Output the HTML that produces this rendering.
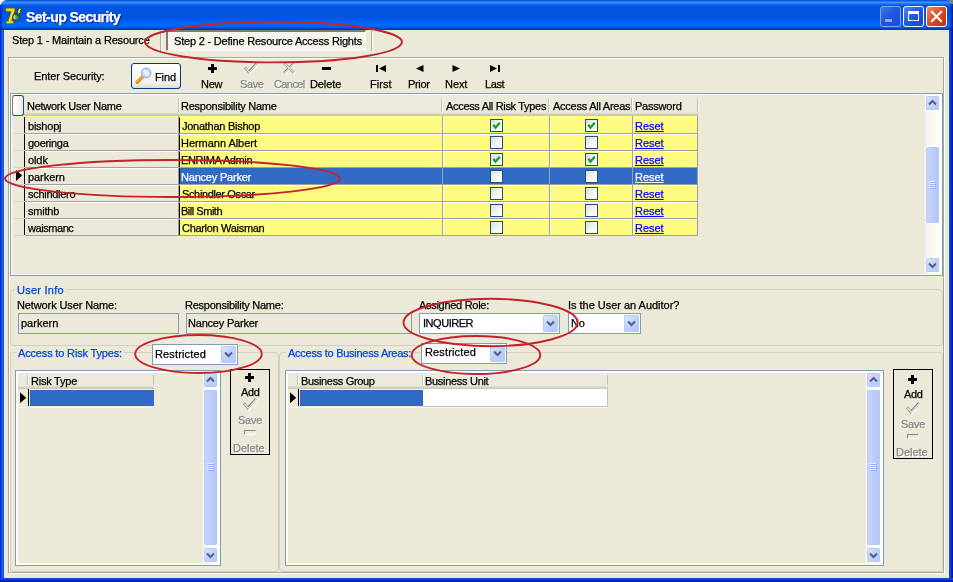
<!DOCTYPE html>
<html><head><meta charset="utf-8"><title>Set-up Security</title>
<style>
html,body{margin:0;padding:0}
body{width:953px;height:582px;position:relative;overflow:hidden;background:#ECE9D8;font:11px "Liberation Sans",sans-serif;color:#000}
.a{position:absolute}
.t{position:absolute;white-space:nowrap;line-height:13px;height:13px;will-change:transform;-webkit-text-stroke:0.25px currentColor}
.blue{color:#0046D5}
.dis{color:#858585;text-shadow:1px 1px 0 #fff}
.hl{position:absolute;height:1px}
.vl{position:absolute;width:1px}
.edit{position:absolute;border:1px solid #7F9DB9;box-sizing:border-box}
.combo{position:absolute;border:1px solid #7F9DB9;box-sizing:border-box;background:#fff}
.cbtn{position:absolute;border-radius:2px;background:linear-gradient(135deg,#E1EAFE 0%,#C3D3FD 45%,#B0C4F8 100%);box-shadow:inset 0 0 0 1px #B7CAF5}
.grp{position:absolute;border:1px solid #D0D0BF;border-radius:4px;box-sizing:border-box}
.sb{position:absolute;width:17px;background:linear-gradient(to right,#F3F1EC 0%,#FEFEFB 80%,#fff 100%)}
.sbtn{position:absolute;left:1px;width:13px;height:14px;border-radius:2px;background:linear-gradient(135deg,#DCE6FD 0%,#C2D2FC 50%,#B5C8F7 100%);box-shadow:inset 0 0 0 1px #B7CAF5, 0 0 0 1px #fff}
.thumb{position:absolute;left:1px;width:13px;border-radius:2px;background:linear-gradient(to right,#C9D7FC 0%,#BDCDFA 50%,#B4C6F5 100%);box-shadow:inset 0 0 0 1px #B7CAF5, 0 0 0 1px #fff}
.chk{position:absolute;width:13px;height:13px;box-sizing:border-box;border:1px solid #1C5180;background:linear-gradient(135deg,#DCDCD7 0%,#F3F3EF 50%,#fff 100%)}
.rs{text-decoration:underline}
</style></head>
<body>
<!-- window frame -->
<div class="a" style="left:0;top:0;width:8px;height:8px;background:#fff"></div><div class="a" style="left:945px;top:0;width:8px;height:8px;background:#808080"></div>
<div class="a" style="left:0;top:0;width:953px;height:30px;border-radius:7px 7px 0 0;background:linear-gradient(to bottom,#0046D0 0px,#2878F0 1.5px,#3C8CFC 2.5px,#2880F8 3.5px,#1068F0 4.5px,#0458E4 5.5px,#0054E0 7px,#0054E0 17px,#0056E6 18.5px,#005CF0 20.5px,#0064FA 22.5px,#0068FF 24px,#0068FF 26px,#0058E8 27.5px,#0044C8 28.5px,#0030A8 30px)"></div>
<div class="a" style="left:949px;top:4px;width:4px;height:26px;background:linear-gradient(to right,rgba(0,20,140,0) 0%,rgba(0,20,140,0.35) 50%,rgba(0,16,120,0.85) 100%)"></div><div class="a" style="left:0;top:5px;width:3px;height:25px;background:linear-gradient(to right,rgba(0,20,180,0.75) 0%,rgba(0,30,200,0) 100%)"></div>
<div class="a" style="left:0;top:30px;width:4px;height:552px;background:linear-gradient(to right,#0019CF 0%,#0831D9 25%,#166AEE 50%,#0855DD 100%)"></div>
<div class="a" style="left:949px;top:30px;width:4px;height:552px;background:linear-gradient(to right,#0855DD 0%,#0441D8 40%,#001DA0 80%,#00138C 100%)"></div>
<div class="a" style="left:0;top:578px;width:953px;height:4px;background:linear-gradient(to bottom,#0855DD 0%,#0441D8 40%,#001DA0 80%,#00138C 100%)"></div>
<div class="t" style="left:26.40px;top:8px;font-size:14px;font-weight:bold;letter-spacing:-0.571px;color:#fff;line-height:18px;height:18px;text-shadow:1px 1px 1px #0A1883">Set-up Security</div>
<!-- app icon -->
<svg class="a" style="left:0;top:0" width="30" height="30" viewBox="0 0 30 30">
<path d="M6.6 9 H15.3 V11.2 L12.1 21.6 H13.9 V24 H6.9 V21.9 H8.8 L11.9 12 H6.6 Z" fill="#5A4000"/>
<path d="M6 8.3 H14.7 V10.5 L11.5 21 H13.3 V23.4 H6.3 V21.3 H8.2 L11.3 11.3 H6 Z" fill="#F2E600" stroke="#9A7A00" stroke-width="0.5"/>
<circle cx="16" cy="17.3" r="3.4" fill="#2E9E3E" stroke="#1C2C2C" stroke-width="0.9"/>
<path d="M13.2 17.3 A2.8 2.8 0 0 1 15.2 14.6 L15.6 17.3 L15 19.9 A2.8 2.8 0 0 1 13.2 17.3 Z" fill="#C8B8B8"/>
<path d="M19.3 7.8 L21.6 9 L20 11 L21 11.6 L17.4 15.6 L18.2 12.5 L17.2 12 Z" fill="#FFF200" stroke="#2A2400" stroke-width="0.6"/>
</svg>
<!-- caption buttons -->
<div class="a" style="left:880px;top:6px;width:21px;height:21px;box-sizing:border-box;border:1px solid #7FA4F2;border-radius:3px;background:linear-gradient(135deg,#3C78F0 0%,#1E55E0 50%,#1A4CD8 100%)"><div class="a" style="left:4px;top:12px;width:7px;height:3px;background:#8FA6EE"></div></div>
<div class="a" style="left:903px;top:6px;width:21px;height:21px;box-sizing:border-box;border:1px solid #fff;border-radius:3px;background:linear-gradient(135deg,#4D86F5 0%,#1F58E2 50%,#1A47D0 100%)"><div class="a" style="left:4px;top:4px;width:11px;height:10px;box-sizing:border-box;border:1px solid #fff;border-top-width:3px"></div></div>
<div class="a" style="left:926px;top:6px;width:21px;height:21px;box-sizing:border-box;border:1px solid #fff;border-radius:3px;background:linear-gradient(135deg,#EE8C68 0%,#DC4A22 50%,#C0300C 100%)"><svg class="a" style="left:0;top:0" width="19" height="19"><path d="M5 5 L14 14 M14 5 L5 14" stroke="#fff" stroke-width="2.2" stroke-linecap="square"/></svg></div>
<!-- tabs -->
<div class="t" style="left:12.10px;top:34px;letter-spacing:-0.174px;">Step 1 - Maintain a Resource</div><div class="vl" style="left:160px;top:30px;height:21px;background:#ACA899"></div><div class="vl" style="left:161px;top:30px;height:21px;background:#fff"></div>
<div class="a" style="left:166px;top:30px;width:200px;height:21px;box-sizing:border-box;background:#F6F4EC;border-left:2px solid #807D70;border-top:2px solid #807D70;border-right:1px solid #fff;border-bottom:1px solid #fff"></div>
<div class="t" style="left:173.50px;top:35px;letter-spacing:-0.203px;">Step 2 - Define Resource Access Rights</div><div class="vl" style="left:371px;top:30px;height:21px;background:#ACA899"></div><div class="vl" style="left:372px;top:30px;height:21px;background:#fff"></div>
<!-- page panel -->
<div class="a" style="left:9px;top:58px;width:936px;height:516px;box-sizing:border-box;border:1px solid #fff"></div><div class="a" style="left:8px;top:57px;width:936px;height:516px;box-sizing:border-box;border:1px solid #ACA899"></div>
<!-- toolbar -->
<div class="t" style="left:34.10px;top:70px;letter-spacing:-0.107px;">Enter Security:</div><div class="a" style="left:131px;top:63px;width:50px;height:26px;box-sizing:border-box;border:1px solid #003C74;border-radius:3px;background:linear-gradient(to bottom,#fff 0%,#F8F8F4 40%,#F1F0EA 80%,#DDDACD 100%)"></div>
<svg class="a" style="left:135px;top:67px" width="18" height="18" viewBox="0 0 18 18"><path d="M2.2 15.3 L7.6 9.9" stroke="#C87818" stroke-width="3.4" stroke-linecap="round"/><path d="M2.2 15 L7.6 9.6" stroke="#F4A62A" stroke-width="2.2" stroke-linecap="round"/><circle cx="11.2" cy="6" r="4.7" fill="#BFE2FA" stroke="#A9B8D8" stroke-width="1.4"/><circle cx="11.6" cy="6.4" r="2.2" fill="#E8F6FF"/><circle cx="9.8" cy="4.6" r="1.3" fill="#fff"/></svg>
<div class="t" style="left:155.30px;top:71px;letter-spacing:-0.100px;">Find</div><div class="a" style="left:208px;top:67px;width:9px;height:3px;background:#000"></div><div class="a" style="left:211px;top:64px;width:3px;height:9px;background:#000"></div><div class="t" style="left:201.25px;top:78px;letter-spacing:-0.250px;">New</div><svg class="a" style="left:241.5px;top:60.3px" width="19" height="17" fill="none" stroke-linecap="butt" stroke-linejoin="miter"><path d="M3 7.4 L6.8 12 L15 2.8" transform="translate(0.9,0.9)" stroke="#fff" stroke-width="2.6"/><path d="M3 7.4 L6.8 12 L15 2.8" stroke="#858585" stroke-width="2.6"/><path d="M3 7.4 L6.8 12 L15 2.8" transform="translate(0.35,0.35)" stroke="#ECE9D8" stroke-width="1.3"/></svg><div class="t dis" style="left:239.50px;top:78px;letter-spacing:-0.400px;">Save</div><svg class="a" style="left:279.5px;top:60.3px" width="19" height="17" fill="none" stroke-linecap="butt"><path d="M4 3.2 L14 12.8 M14 3.2 L4 12.8" transform="translate(0.9,0.9)" stroke="#fff" stroke-width="2.4"/><path d="M4 3.2 L14 12.8 M14 3.2 L4 12.8" stroke="#858585" stroke-width="2.4"/><path d="M4 3.2 L14 12.8 M14 3.2 L4 12.8" transform="translate(0.35,0.35)" stroke="#ECE9D8" stroke-width="1.2"/></svg><div class="t dis" style="left:273.80px;top:78px;letter-spacing:-0.600px;">Cancel</div><div class="a" style="left:322px;top:67px;width:9px;height:3px;background:#000"></div><div class="t" style="left:310.35px;top:78px;letter-spacing:-0.100px;">Delete</div><svg class="a" style="left:375px;top:64px" width="12" height="9"><rect x="1" y="1" width="2" height="7" fill="#000"/><path d="M11 1 L11 8 L4 4.5 Z" fill="#000"/></svg><div class="t" style="left:369.60px;top:78px;letter-spacing:0.050px;">First</div><svg class="a" style="left:415px;top:64px" width="9" height="9"><path d="M8.5 1 L8.5 8 L1 4.5 Z" fill="#000"/></svg><div class="t" style="left:407.80px;top:78px;letter-spacing:-0.350px;">Prior</div><svg class="a" style="left:452px;top:64px" width="9" height="9"><path d="M0.5 1 L0.5 8 L8 4.5 Z" fill="#000"/></svg><div class="t" style="left:444.70px;top:78px;letter-spacing:-0.067px;">Next</div><svg class="a" style="left:489px;top:64px" width="12" height="9"><rect x="9" y="1" width="2" height="7" fill="#000"/><path d="M1 1 L1 8 L8 4.5 Z" fill="#000"/></svg><div class="t" style="left:484.60px;top:78px;letter-spacing:-0.400px;">Last</div>
<!-- main grid -->
<div class="a" style="left:10px;top:93px;width:933px;height:183px;box-sizing:border-box;border:1px solid #7F9DB9;box-shadow:inset 0 0 0 1px #fff"></div>
<div class="a" style="left:12px;top:95px;width:686px;height:21px;background:linear-gradient(to bottom,#EBEADB 0%,#EBEADB 82%,#E2DECD 86%,#D6D2C2 91%,#CBC7B8 96%,#CBC7B8 100%)"></div>
<div class="a" style="left:12px;top:95px;width:12px;height:21px;box-sizing:border-box;border:1px solid #1C5180;border-left-color:#8C7B5A;border-radius:3px;background:linear-gradient(to right,#fff 0%,#F4F3EE 70%,#E4E2D8 100%)"></div>
<div class="t" style="left:26.80px;top:100px;letter-spacing:-0.263px;">Network User Name</div><div class="t" style="left:181.20px;top:100px;letter-spacing:-0.244px;">Responsibility Name</div><div class="t" style="left:445.50px;top:100px;letter-spacing:-0.320px;">Access All Risk Types</div><div class="t" style="left:552.70px;top:100px;letter-spacing:-0.247px;">Access All Areas</div><div class="t" style="left:634.60px;top:100px;letter-spacing:-0.214px;">Password</div><div class="vl" style="left:178px;top:98px;height:14px;background:#C5C2B2"></div><div class="vl" style="left:179px;top:98px;height:14px;background:#fff"></div><div class="vl" style="left:441px;top:98px;height:14px;background:#C5C2B2"></div><div class="vl" style="left:442px;top:98px;height:14px;background:#fff"></div><div class="vl" style="left:548px;top:98px;height:14px;background:#C5C2B2"></div><div class="vl" style="left:549px;top:98px;height:14px;background:#fff"></div><div class="vl" style="left:631px;top:98px;height:14px;background:#C5C2B2"></div><div class="vl" style="left:632px;top:98px;height:14px;background:#fff"></div><div class="vl" style="left:697px;top:98px;height:14px;background:#C5C2B2"></div><div class="vl" style="left:698px;top:98px;height:14px;background:#fff"></div>
<div class="a" style="left:25px;top:116px;width:672px;height:1px;background:#FFFB80"></div>
<div class="hl" style="left:14px;top:133px;width:10px;background:#D8D5C6"></div><div class="a" style="left:24px;top:117px;width:154px;height:16px;border-left:1px solid #000;box-sizing:border-box"></div><div class="hl" style="left:25px;top:133px;width:672px;background:#A0A0A0"></div><div class="t" style="left:27.50px;top:120px;letter-spacing:-0.233px;">bishopj</div><div class="a" style="left:179px;top:117px;width:263px;height:16px;background:#FFFB80;box-sizing:border-box;border-left:1px solid #000;border-top:1px solid #fff"></div><div class="a" style="left:443px;top:117px;width:106px;height:16px;background:#FFFB80;box-sizing:border-box;border-left:1px solid #fff;border-top:1px solid #fff"></div><div class="a" style="left:550px;top:117px;width:82px;height:16px;background:#FFFB80;box-sizing:border-box;border-left:1px solid #fff;border-top:1px solid #fff"></div><div class="a" style="left:633px;top:117px;width:64px;height:16px;background:#FFFB80;box-sizing:border-box;border-left:1px solid #fff;border-top:1px solid #fff"></div><div class="t" style="left:182.40px;top:120px;letter-spacing:-0.264px;color:#000">Jonathan Bishop</div><div class="chk" style="left:490px;top:119px"><svg class="a" style="left:0;top:0" width="11" height="11"><path d="M2.3 4.8 L4.5 7.6 L8.8 2.8" fill="none" stroke="#21A121" stroke-width="2.4"/></svg></div><div class="chk" style="left:585px;top:119px"><svg class="a" style="left:0;top:0" width="11" height="11"><path d="M2.3 4.8 L4.5 7.6 L8.8 2.8" fill="none" stroke="#21A121" stroke-width="2.4"/></svg></div><div class="t rs" style="left:634.70px;top:120px;letter-spacing:-0.025px;color:#0000FF">Reset</div>
<div class="hl" style="left:14px;top:150px;width:10px;background:#D8D5C6"></div><div class="a" style="left:24px;top:134px;width:154px;height:16px;border-left:1px solid #000;box-sizing:border-box"></div><div class="hl" style="left:25px;top:150px;width:672px;background:#A0A0A0"></div><div class="hl" style="left:25px;top:134px;width:153px;background:#fff"></div><div class="t" style="left:27.50px;top:137px;letter-spacing:-0.286px;">goeringa</div><div class="a" style="left:179px;top:134px;width:263px;height:16px;background:#FFFB80;box-sizing:border-box;border-left:1px solid #000;border-top:1px solid #fff"></div><div class="a" style="left:443px;top:134px;width:106px;height:16px;background:#FFFB80;box-sizing:border-box;border-left:1px solid #fff;border-top:1px solid #fff"></div><div class="a" style="left:550px;top:134px;width:82px;height:16px;background:#FFFB80;box-sizing:border-box;border-left:1px solid #fff;border-top:1px solid #fff"></div><div class="a" style="left:633px;top:134px;width:64px;height:16px;background:#FFFB80;box-sizing:border-box;border-left:1px solid #fff;border-top:1px solid #fff"></div><div class="t" style="left:181.40px;top:137px;letter-spacing:-0.038px;color:#000">Hermann Albert</div><div class="chk" style="left:490px;top:136px"></div><div class="chk" style="left:585px;top:136px"></div><div class="t rs" style="left:634.70px;top:137px;letter-spacing:-0.025px;color:#0000FF">Reset</div>
<div class="hl" style="left:14px;top:167px;width:10px;background:#D8D5C6"></div><div class="a" style="left:24px;top:151px;width:154px;height:16px;border-left:1px solid #000;box-sizing:border-box"></div><div class="hl" style="left:25px;top:167px;width:672px;background:#A0A0A0"></div><div class="hl" style="left:25px;top:151px;width:153px;background:#fff"></div><div class="t" style="left:27.50px;top:154px;letter-spacing:-0.100px;">oldk</div><div class="a" style="left:179px;top:151px;width:263px;height:16px;background:#FFFB80;box-sizing:border-box;border-left:1px solid #000;border-top:1px solid #fff"></div><div class="a" style="left:443px;top:151px;width:106px;height:16px;background:#FFFB80;box-sizing:border-box;border-left:1px solid #fff;border-top:1px solid #fff"></div><div class="a" style="left:550px;top:151px;width:82px;height:16px;background:#FFFB80;box-sizing:border-box;border-left:1px solid #fff;border-top:1px solid #fff"></div><div class="a" style="left:633px;top:151px;width:64px;height:16px;background:#FFFB80;box-sizing:border-box;border-left:1px solid #fff;border-top:1px solid #fff"></div><div class="t" style="left:181.40px;top:154px;letter-spacing:-0.391px;color:#000">ENRIMA Admin</div><div class="chk" style="left:490px;top:153px"><svg class="a" style="left:0;top:0" width="11" height="11"><path d="M2.3 4.8 L4.5 7.6 L8.8 2.8" fill="none" stroke="#21A121" stroke-width="2.4"/></svg></div><div class="chk" style="left:585px;top:153px"><svg class="a" style="left:0;top:0" width="11" height="11"><path d="M2.3 4.8 L4.5 7.6 L8.8 2.8" fill="none" stroke="#21A121" stroke-width="2.4"/></svg></div><div class="t rs" style="left:634.70px;top:154px;letter-spacing:-0.025px;color:#0000FF">Reset</div>
<div class="hl" style="left:14px;top:184px;width:10px;background:#D8D5C6"></div><div class="a" style="left:24px;top:168px;width:154px;height:16px;border-left:1px solid #000;box-sizing:border-box"></div><div class="hl" style="left:25px;top:184px;width:672px;background:#A0A0A0"></div><div class="hl" style="left:25px;top:168px;width:153px;background:#fff"></div><div class="t" style="left:27.50px;top:171px;letter-spacing:-0.067px;">parkern</div><div class="a" style="left:179px;top:168px;width:263px;height:16px;background:#316AC5;box-sizing:border-box;border-left:1px solid #000;border-top:1px solid #316AC5"></div><div class="a" style="left:443px;top:168px;width:106px;height:16px;background:#316AC5;box-sizing:border-box;border-left:1px solid #316AC5;border-top:1px solid #316AC5"></div><div class="a" style="left:550px;top:168px;width:82px;height:16px;background:#316AC5;box-sizing:border-box;border-left:1px solid #316AC5;border-top:1px solid #316AC5"></div><div class="a" style="left:633px;top:168px;width:64px;height:16px;background:#316AC5;box-sizing:border-box;border-left:1px solid #316AC5;border-top:1px solid #316AC5"></div><div class="t" style="left:181.40px;top:171px;letter-spacing:-0.208px;color:#fff">Nancey Parker</div><div class="chk" style="left:490px;top:170px"></div><div class="chk" style="left:585px;top:170px"></div><div class="t rs" style="left:634.70px;top:171px;letter-spacing:-0.025px;color:#fff">Reset</div>
<div class="hl" style="left:14px;top:201px;width:10px;background:#D8D5C6"></div><div class="a" style="left:24px;top:185px;width:154px;height:16px;border-left:1px solid #000;box-sizing:border-box"></div><div class="hl" style="left:25px;top:201px;width:672px;background:#A0A0A0"></div><div class="hl" style="left:25px;top:185px;width:153px;background:#fff"></div><div class="t" style="left:27.50px;top:188px;letter-spacing:-0.289px;">schindlero</div><div class="a" style="left:179px;top:185px;width:263px;height:16px;background:#FFFB80;box-sizing:border-box;border-left:1px solid #000;border-top:1px solid #fff"></div><div class="a" style="left:443px;top:185px;width:106px;height:16px;background:#FFFB80;box-sizing:border-box;border-left:1px solid #fff;border-top:1px solid #fff"></div><div class="a" style="left:550px;top:185px;width:82px;height:16px;background:#FFFB80;box-sizing:border-box;border-left:1px solid #fff;border-top:1px solid #fff"></div><div class="a" style="left:633px;top:185px;width:64px;height:16px;background:#FFFB80;box-sizing:border-box;border-left:1px solid #fff;border-top:1px solid #fff"></div><div class="t" style="left:182.40px;top:188px;letter-spacing:-0.357px;color:#000">Schindler Oscar</div><div class="chk" style="left:490px;top:187px"></div><div class="chk" style="left:585px;top:187px"></div><div class="t rs" style="left:634.70px;top:188px;letter-spacing:-0.025px;color:#0000FF">Reset</div>
<div class="hl" style="left:14px;top:218px;width:10px;background:#D8D5C6"></div><div class="a" style="left:24px;top:202px;width:154px;height:16px;border-left:1px solid #000;box-sizing:border-box"></div><div class="hl" style="left:25px;top:218px;width:672px;background:#A0A0A0"></div><div class="hl" style="left:25px;top:202px;width:153px;background:#fff"></div><div class="t" style="left:27.50px;top:205px;letter-spacing:-0.200px;">smithb</div><div class="a" style="left:179px;top:202px;width:263px;height:16px;background:#FFFB80;box-sizing:border-box;border-left:1px solid #000;border-top:1px solid #fff"></div><div class="a" style="left:443px;top:202px;width:106px;height:16px;background:#FFFB80;box-sizing:border-box;border-left:1px solid #fff;border-top:1px solid #fff"></div><div class="a" style="left:550px;top:202px;width:82px;height:16px;background:#FFFB80;box-sizing:border-box;border-left:1px solid #fff;border-top:1px solid #fff"></div><div class="a" style="left:633px;top:202px;width:64px;height:16px;background:#FFFB80;box-sizing:border-box;border-left:1px solid #fff;border-top:1px solid #fff"></div><div class="t" style="left:181.40px;top:205px;letter-spacing:-0.478px;color:#000">Bill Smith</div><div class="chk" style="left:490px;top:204px"></div><div class="chk" style="left:585px;top:204px"></div><div class="t rs" style="left:634.70px;top:205px;letter-spacing:-0.025px;color:#0000FF">Reset</div>
<div class="hl" style="left:14px;top:235px;width:10px;background:#D8D5C6"></div><div class="a" style="left:24px;top:219px;width:154px;height:16px;border-left:1px solid #000;box-sizing:border-box"></div><div class="hl" style="left:25px;top:235px;width:672px;background:#A0A0A0"></div><div class="hl" style="left:25px;top:219px;width:153px;background:#fff"></div><div class="t" style="left:27.50px;top:222px;letter-spacing:-0.443px;">waismanc</div><div class="a" style="left:179px;top:219px;width:263px;height:16px;background:#FFFB80;box-sizing:border-box;border-left:1px solid #000;border-top:1px solid #fff"></div><div class="a" style="left:443px;top:219px;width:106px;height:16px;background:#FFFB80;box-sizing:border-box;border-left:1px solid #fff;border-top:1px solid #fff"></div><div class="a" style="left:550px;top:219px;width:82px;height:16px;background:#FFFB80;box-sizing:border-box;border-left:1px solid #fff;border-top:1px solid #fff"></div><div class="a" style="left:633px;top:219px;width:64px;height:16px;background:#FFFB80;box-sizing:border-box;border-left:1px solid #fff;border-top:1px solid #fff"></div><div class="t" style="left:182.40px;top:222px;letter-spacing:-0.307px;color:#000">Charlon Waisman</div><div class="chk" style="left:490px;top:221px"></div><div class="chk" style="left:585px;top:221px"></div><div class="t rs" style="left:634.70px;top:222px;letter-spacing:-0.025px;color:#0000FF">Reset</div>
<div class="vl" style="left:178px;top:116px;height:120px;background:#A0A0A0"></div><div class="vl" style="left:442px;top:116px;height:120px;background:#A0A0A0"></div><div class="vl" style="left:549px;top:116px;height:120px;background:#A0A0A0"></div><div class="vl" style="left:632px;top:116px;height:120px;background:#A0A0A0"></div><div class="vl" style="left:697px;top:116px;height:120px;background:#A0A0A0"></div><svg class="a" style="left:16px;top:170px" width="7" height="12"><path d="M0 0 L6.2 5.5 L0 11 Z" fill="#000"/></svg>
<div class="sb" style="left:925px;top:94px;height:181px"><div class="sbtn" style="top:2px"><svg class="a" style="left:2px;top:3px" width="9" height="7"><path d="M1 5.5 L4.5 2 L8 5.5" fill="none" stroke="#4D6185" stroke-width="2"/></svg></div><div class="sbtn" style="top:164px"><svg class="a" style="left:2px;top:4px" width="9" height="7"><path d="M1 1.5 L4.5 5 L8 1.5" fill="none" stroke="#4D6185" stroke-width="2"/></svg></div><div class="thumb" style="top:53px;height:76px"><div class="a" style="left:-1px;top:34px;width:15px;height:8px"><div class="hl" style="left:4px;top:0px;width:6px;background:#EEF4FE"></div><div class="hl" style="left:5px;top:1px;width:6px;background:#8CB0F8"></div><div class="hl" style="left:4px;top:2px;width:6px;background:#EEF4FE"></div><div class="hl" style="left:5px;top:3px;width:6px;background:#8CB0F8"></div><div class="hl" style="left:4px;top:4px;width:6px;background:#EEF4FE"></div><div class="hl" style="left:5px;top:5px;width:6px;background:#8CB0F8"></div><div class="hl" style="left:4px;top:6px;width:6px;background:#EEF4FE"></div><div class="hl" style="left:5px;top:7px;width:6px;background:#8CB0F8"></div></div></div></div>
<!-- user info -->
<div class="grp" style="left:10px;top:289px;width:933px;height:57px"></div>
<div class="t blue" style="left:17.30px;top:284px;letter-spacing:0.250px;background:#ECE9D8;box-shadow:-2px 0 0 #ECE9D8,2px 0 0 #ECE9D8">User Info</div><div class="t" style="left:17.30px;top:299px;letter-spacing:-0.118px;">Network User Name:</div><div class="edit" style="left:18px;top:313px;width:161px;height:21px"></div><div class="t" style="left:21.30px;top:317px;letter-spacing:0.000px;">parkern</div><div class="t" style="left:185.40px;top:299px;letter-spacing:-0.242px;">Responsibility Name:</div><div class="edit" style="left:186px;top:313px;width:226px;height:21px"></div><div class="t" style="left:188.30px;top:317px;letter-spacing:-0.208px;">Nancey Parker</div><div class="t" style="left:418.70px;top:299px;letter-spacing:-0.292px;">Assigned Role:</div><div class="t" style="left:567.80px;top:299px;letter-spacing:-0.023px;">Is the User an Auditor?</div><div class="combo" style="left:419px;top:313px;width:141px;height:21px"></div><div class="t" style="left:422.80px;top:317px;letter-spacing:-0.464px;">INQUIRER</div><div class="cbtn" style="left:543px;top:315px;width:15px;height:17px"><svg class="a" style="left:3px;top:5px" width="9" height="7"><path d="M1 1.5 L4.5 5 L8 1.5" fill="none" stroke="#4D6185" stroke-width="2"/></svg></div>
<div class="combo" style="left:568px;top:313px;width:73px;height:21px"></div><div class="t" style="left:571.30px;top:317px;letter-spacing:-0.250px;">No</div><div class="cbtn" style="left:624px;top:315px;width:15px;height:17px"><svg class="a" style="left:3px;top:5px" width="9" height="7"><path d="M1 1.5 L4.5 5 L8 1.5" fill="none" stroke="#4D6185" stroke-width="2"/></svg></div>
<!-- groups -->
<div class="grp" style="left:10px;top:352px;width:269px;height:220px"></div>
<div class="t blue" style="left:18.30px;top:347px;letter-spacing:-0.163px;background:#ECE9D8;box-shadow:-2px 0 0 #ECE9D8,2px 0 0 #ECE9D8">Access to Risk Types:</div><div class="grp" style="left:279px;top:352px;width:664px;height:220px"></div>
<div class="t blue" style="left:288.05px;top:347px;letter-spacing:-0.260px;background:#ECE9D8;box-shadow:-2px 0 0 #ECE9D8,2px 0 0 #ECE9D8">Access to Business Areas:</div><div class="combo" style="left:152px;top:344px;width:86px;height:21px"></div><div class="t" style="left:155.20px;top:348px;letter-spacing:0.139px;">Restricted</div><div class="cbtn" style="left:221px;top:346px;width:15px;height:17px"><svg class="a" style="left:3px;top:5px" width="9" height="7"><path d="M1 1.5 L4.5 5 L8 1.5" fill="none" stroke="#4D6185" stroke-width="2"/></svg></div>
<div class="combo" style="left:421px;top:343px;width:86px;height:21px"></div><div class="t" style="left:424.80px;top:346px;letter-spacing:0.139px;">Restricted</div><div class="cbtn" style="left:490px;top:345px;width:15px;height:17px"><svg class="a" style="left:3px;top:5px" width="9" height="7"><path d="M1 1.5 L4.5 5 L8 1.5" fill="none" stroke="#4D6185" stroke-width="2"/></svg></div>
<!-- risk grid -->
<div class="a" style="left:15px;top:370px;width:206px;height:196px;box-sizing:border-box;border:1px solid #7F9DB9;box-shadow:inset 0 0 0 2px #fff"></div><div class="a" style="left:18px;top:373px;width:136px;height:16px;background:linear-gradient(to bottom,#EBEADB 0%,#EBEADB 78%,#E2DECD 84%,#D6D2C2 90%,#CBC7B8 100%)"></div><div class="vl" style="left:27px;top:375px;height:10px;background:#C5C2B2"></div><div class="vl" style="left:28px;top:375px;height:10px;background:#fff"></div><div class="t" style="left:30.70px;top:375px;letter-spacing:-0.225px;">Risk Type</div><div class="vl" style="left:153px;top:375px;height:10px;background:#C5C2B2"></div><div class="a" style="left:28px;top:389px;width:1px;height:17px;background:#000"></div><div class="a" style="left:30px;top:389px;width:124px;height:17px;background:#316AC5;border-top:1px solid #F6F4EA;box-sizing:border-box"></div><div class="hl" style="left:18px;top:407px;width:136px;background:#F8F7F1"></div><svg class="a" style="left:20px;top:392px" width="7" height="12"><path d="M0 0.3 L6.2 5.8 L0 11.3 Z" fill="#000"/></svg><div class="sb" style="left:203px;top:371px;height:194px"><div class="sbtn" style="top:2px"><svg class="a" style="left:2px;top:3px" width="9" height="7"><path d="M1 5.5 L4.5 2 L8 5.5" fill="none" stroke="#4D6185" stroke-width="2"/></svg></div><div class="sbtn" style="top:177px"><svg class="a" style="left:2px;top:4px" width="9" height="7"><path d="M1 1.5 L4.5 5 L8 1.5" fill="none" stroke="#4D6185" stroke-width="2"/></svg></div><div class="thumb" style="top:19px;height:155px"><div class="a" style="left:-1px;top:73px;width:15px;height:8px"><div class="hl" style="left:4px;top:0px;width:6px;background:#EEF4FE"></div><div class="hl" style="left:5px;top:1px;width:6px;background:#8CB0F8"></div><div class="hl" style="left:4px;top:2px;width:6px;background:#EEF4FE"></div><div class="hl" style="left:5px;top:3px;width:6px;background:#8CB0F8"></div><div class="hl" style="left:4px;top:4px;width:6px;background:#EEF4FE"></div><div class="hl" style="left:5px;top:5px;width:6px;background:#8CB0F8"></div><div class="hl" style="left:4px;top:6px;width:6px;background:#EEF4FE"></div><div class="hl" style="left:5px;top:7px;width:6px;background:#8CB0F8"></div></div></div></div>
<div class="a" style="left:230px;top:369px;width:40px;height:86px;box-sizing:border-box;border:1px solid #000"></div><div class="a" style="left:245px;top:376px;width:9px;height:3px;background:#000"></div><div class="a" style="left:248px;top:373px;width:3px;height:9px;background:#000"></div><div class="t" style="left:240.50px;top:386px;letter-spacing:-0.400px;">Add</div><svg class="a" style="left:240.75px;top:396.25px" width="19" height="17" fill="none" stroke-linecap="butt" stroke-linejoin="miter"><path d="M3 7.4 L6.8 12 L15 2.8" transform="translate(0.9,0.9)" stroke="#fff" stroke-width="2.6"/><path d="M3 7.4 L6.8 12 L15 2.8" stroke="#858585" stroke-width="2.6"/><path d="M3 7.4 L6.8 12 L15 2.8" transform="translate(0.35,0.35)" stroke="#ECE9D8" stroke-width="1.3"/></svg><div class="t dis" style="left:237.90px;top:414px;letter-spacing:-0.267px;">Save</div><div class="a" style="left:244px;top:430px;width:12px;height:5px;box-sizing:border-box;border:1px solid #858585;border-right-color:#fff;border-bottom-color:#fff"></div><div class="t dis" style="left:233.40px;top:442px;letter-spacing:-0.040px;">Delete</div>
<!-- business grid -->
<div class="a" style="left:285px;top:370px;width:599px;height:196px;box-sizing:border-box;border:1px solid #7F9DB9;box-shadow:inset 0 0 0 2px #fff"></div><div class="a" style="left:288px;top:373px;width:320px;height:16px;background:linear-gradient(to bottom,#EBEADB 0%,#EBEADB 78%,#E2DECD 84%,#D6D2C2 90%,#CBC7B8 100%)"></div><div class="vl" style="left:297px;top:375px;height:10px;background:#C5C2B2"></div><div class="vl" style="left:298px;top:375px;height:10px;background:#fff"></div><div class="t" style="left:300.50px;top:375px;letter-spacing:-0.331px;">Business Group</div><div class="vl" style="left:422px;top:375px;height:10px;background:#C5C2B2"></div><div class="vl" style="left:423px;top:375px;height:10px;background:#fff"></div><div class="t" style="left:425.40px;top:375px;letter-spacing:-0.300px;">Business Unit</div><div class="vl" style="left:607px;top:375px;height:10px;background:#C5C2B2"></div><div class="a" style="left:298px;top:389px;width:1px;height:17px;background:#000"></div><div class="a" style="left:300px;top:389px;width:123px;height:17px;background:#316AC5;border-top:1px solid #F6F4EA;box-sizing:border-box"></div><div class="a" style="left:423px;top:389px;width:185px;height:17px;background:#fff"></div><div class="vl" style="left:607px;top:389px;height:18px;background:#C0C0C0"></div><div class="hl" style="left:423px;top:406px;width:185px;background:#C0C0C0"></div><div class="hl" style="left:288px;top:407px;width:320px;background:#F8F7F1"></div><svg class="a" style="left:290px;top:392px" width="7" height="12"><path d="M0 0.3 L6.2 5.8 L0 11.3 Z" fill="#000"/></svg><div class="sb" style="left:866px;top:371px;height:194px"><div class="sbtn" style="top:2px"><svg class="a" style="left:2px;top:3px" width="9" height="7"><path d="M1 5.5 L4.5 2 L8 5.5" fill="none" stroke="#4D6185" stroke-width="2"/></svg></div><div class="sbtn" style="top:177px"><svg class="a" style="left:2px;top:4px" width="9" height="7"><path d="M1 1.5 L4.5 5 L8 1.5" fill="none" stroke="#4D6185" stroke-width="2"/></svg></div><div class="thumb" style="top:19px;height:155px"><div class="a" style="left:-1px;top:73px;width:15px;height:8px"><div class="hl" style="left:4px;top:0px;width:6px;background:#EEF4FE"></div><div class="hl" style="left:5px;top:1px;width:6px;background:#8CB0F8"></div><div class="hl" style="left:4px;top:2px;width:6px;background:#EEF4FE"></div><div class="hl" style="left:5px;top:3px;width:6px;background:#8CB0F8"></div><div class="hl" style="left:4px;top:4px;width:6px;background:#EEF4FE"></div><div class="hl" style="left:5px;top:5px;width:6px;background:#8CB0F8"></div><div class="hl" style="left:4px;top:6px;width:6px;background:#EEF4FE"></div><div class="hl" style="left:5px;top:7px;width:6px;background:#8CB0F8"></div></div></div></div>
<div class="a" style="left:893px;top:369px;width:40px;height:90px;box-sizing:border-box;border:1px solid #000"></div><div class="a" style="left:908px;top:378px;width:9px;height:3px;background:#000"></div><div class="a" style="left:911px;top:375px;width:3px;height:9px;background:#000"></div><div class="t" style="left:903.50px;top:388px;letter-spacing:-0.400px;">Add</div><svg class="a" style="left:903.75px;top:400.25px" width="19" height="17" fill="none" stroke-linecap="butt" stroke-linejoin="miter"><path d="M3 7.4 L6.8 12 L15 2.8" transform="translate(0.9,0.9)" stroke="#fff" stroke-width="2.6"/><path d="M3 7.4 L6.8 12 L15 2.8" stroke="#858585" stroke-width="2.6"/><path d="M3 7.4 L6.8 12 L15 2.8" transform="translate(0.35,0.35)" stroke="#ECE9D8" stroke-width="1.3"/></svg><div class="t dis" style="left:900.90px;top:418px;letter-spacing:-0.267px;">Save</div><div class="a" style="left:907px;top:434px;width:12px;height:5px;box-sizing:border-box;border:1px solid #858585;border-right-color:#fff;border-bottom-color:#fff"></div><div class="t dis" style="left:896.40px;top:446px;letter-spacing:-0.040px;">Delete</div>
<!-- red annotations -->
<svg class="a" style="left:0;top:0;pointer-events:none" width="953" height="582" fill="none" stroke="#C2242A" stroke-width="1.9">
<ellipse cx="273.5" cy="42.1" rx="128.5" ry="20.3"/>
<ellipse cx="172.5" cy="178.5" rx="167.5" ry="18.5"/>
<ellipse cx="490.5" cy="322.5" rx="87" ry="23.7"/>
<ellipse cx="198.5" cy="354" rx="63.3" ry="19"/>
<ellipse cx="476" cy="355" rx="64.3" ry="19"/>
</svg>
</body></html>
